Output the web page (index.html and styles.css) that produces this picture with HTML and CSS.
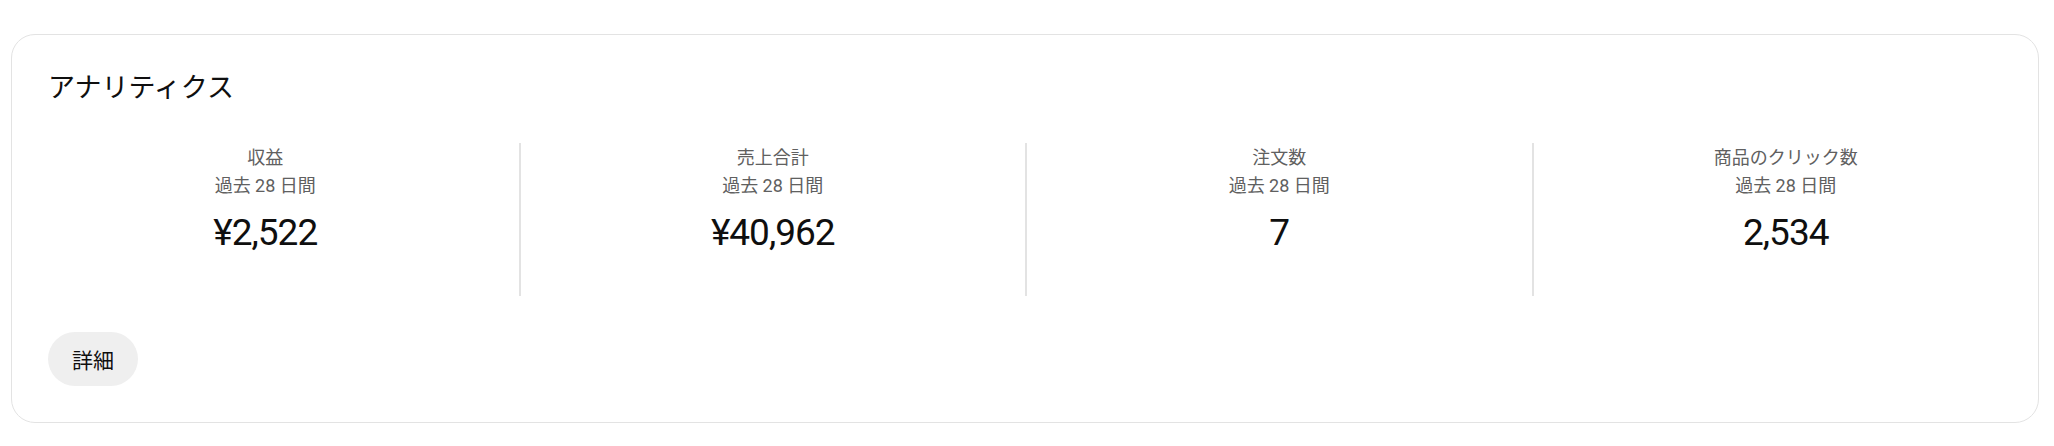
FILE: index.html
```html
<!DOCTYPE html>
<html lang="ja">
<head>
<meta charset="utf-8">
<link rel="stylesheet" href="styles.css">
</head>
<body>
<div class="page">
  <section class="card">
    <h2 class="title">アナリティクス</h2>
    <div class="stats">
      <div class="stat">
        <div class="label">収益</div>
        <div class="period">過去 28 日間</div>
        <div class="value">¥2,522</div>
      </div>
      <div class="stat">
        <div class="label">売上合計</div>
        <div class="period">過去 28 日間</div>
        <div class="value">¥40,962</div>
      </div>
      <div class="stat">
        <div class="label">注文数</div>
        <div class="period">過去 28 日間</div>
        <div class="value">7</div>
      </div>
      <div class="stat">
        <div class="label">商品のクリック数</div>
        <div class="period">過去 28 日間</div>
        <div class="value">2,534</div>
      </div>
    </div>
    <div class="actions">
      <button class="btn">詳細</button>
    </div>
  </section>
</div>
</body>
</html>
```

FILE: styles.css
```css
* { box-sizing: border-box; }
html, body { margin: 0; padding: 0; background: #ffffff; }
body {
  font-family: Roboto, "Noto Sans CJK JP", sans-serif;
  color: #0f0f0f;
}
.page {
  padding: 34px 15px 0 11px;
}
.card {
  border: 1px solid #e3e3e3;
  border-radius: 24px;
  padding: 36px;
  display: flex;
  flex-direction: column;
  gap: 36px;
}
.title {
  margin: -3px 0 3px;
  font-family: "Noto Sans CJK JP", sans-serif;
  font-size: 27px;
  font-weight: 400;
  line-height: 36px;
  color: #0f0f0f;
}
.stats {
  display: grid;
  grid-template-columns: repeat(4, 1fr);
  margin: 0 -36px;
}
.stat {
  display: flex;
  flex-direction: column;
  align-items: center;
  padding-bottom: 40px;
}
.stat + .stat {
  border-left: 2px solid #e3e3e3;
}
.label, .period {
  font-size: 18px;
  line-height: 28px;
  color: #606060;
}
.label {
  margin-top: 1px;
  margin-bottom: -1px;
}
.period {
  margin-top: 1px;
  margin-bottom: -1px;
}
.value {
  margin-top: 10px;
  margin-bottom: -1px;
  font-size: 37px;
  line-height: 48px;
  letter-spacing: -1px;
  color: #0f0f0f;
}
.actions {
  display: flex;
}
.btn {
  font-family: "Noto Sans CJK JP", sans-serif;
  font-size: 21px;
  line-height: 54px;
  height: 54px;
  padding: 0 24px;
  border: none;
  border-radius: 27px;
  background: #efefef;
  color: #0f0f0f;
  font-weight: 400;
}
```
